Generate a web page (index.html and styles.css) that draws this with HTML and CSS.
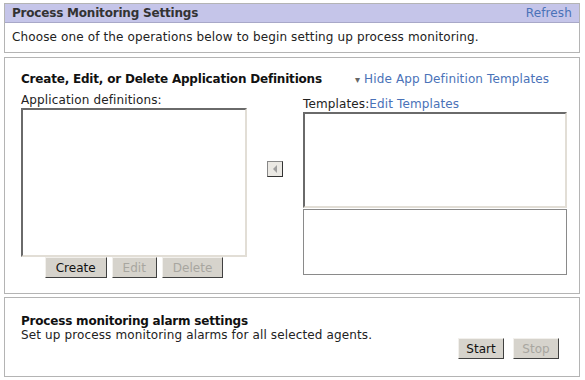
FILE: index.html
```html
<!DOCTYPE html>
<html lang="en">
<head>
    <meta charset="UTF-8">
    <title>Process Monitoring Settings</title>
    <link rel="stylesheet" href="styles.css">
</head>
<body>
    <div class="panel intro">
        <div class="panel-head">
            <span class="panel-title">Process Monitoring Settings</span>
            <a href="#" class="link">Refresh</a>
        </div>
        <div class="intro-text">Choose one of the operations below to begin setting up process monitoring.</div>
    </div>

    <div class="panel defs">
        <div class="defs-head">
            <h3>Create, Edit, or Delete Application Definitions</h3>
            <a href="#" class="link toggle"><span class="caret">&#9662;</span> Hide App Definition Templates</a>
        </div>
        <div class="defs-body">
            <div class="col-left">
                <div class="label">Application definitions:</div>
                <div class="listbox app-list"></div>
                <div class="btn-row">
                    <button class="btn">Create</button>
                    <button class="btn" disabled>Edit</button>
                    <button class="btn" disabled>Delete</button>
                </div>
            </div>
            <div class="col-mid">
                <button class="arrow-btn" disabled><span class="arrow"></span></button>
            </div>
            <div class="col-right">
                <div class="label">Templates:<a href="#" class="link">Edit Templates</a></div>
                <div class="listbox tpl-list"></div>
                <div class="tpl-info"></div>
            </div>
        </div>
    </div>

    <div class="panel alarms">
        <h3>Process monitoring alarm settings</h3>
        <div class="alarms-row">
            <div class="alarms-text">Set up process monitoring alarms for all selected agents.</div>
            <div class="alarms-btns">
                <button class="btn">Start</button>
                <button class="btn" disabled>Stop</button>
            </div>
        </div>
    </div>
</body>
</html>
```

FILE: styles.css
```css
body {
    margin: 0;
    padding: 3px 4px 0 4px;
    font-family: "DejaVu Sans", Verdana, sans-serif;
    font-size: 12px;
    letter-spacing: 0.13px;
    color: #222;
    background: #fff;
}
.link {
    color: #4a72b8;
    text-decoration: none;
}
.panel {
    border: 1px solid #b4b4b4;
    width: 576px;
    box-sizing: border-box;
}
.panel-head {
    display: flex;
    justify-content: space-between;
    align-items: center;
    background: #c5c5e9;
    height: 18px;
    padding: 0 7px 0 7px;
    border-bottom: 1px solid #a8a8c8;
}
.panel-title {
    font-weight: bold;
    color: #333;
    letter-spacing: -0.2px;
}
.intro-text {
    padding: 7px 7px 0 7px;
    height: 22px;
}
.defs {
    height: 237px;
    margin-top: 4px;
    padding: 12px 0 0 16px;
}
.defs h3, .alarms h3 {
    margin: 0;
    font-size: 12px;
    color: #111;
    letter-spacing: -0.2px;
}
.defs-head {
    display: flex;
    align-items: center;
    height: 18px;
}
.defs-head h3 {
    width: 334px;
}
.caret {
    color: #666;
    font-size: 10px;
}
.defs-body {
    display: flex;
    margin-top: 5px;
}
.col-left {
    width: 226px;
}
.label {
    height: 15px;
}
.listbox {
    box-sizing: border-box;
    border: 2px solid;
    border-color: #6a6a6a #e2ded6 #e2ded6 #6a6a6a;
    background: #fff;
}
.app-list {
    width: 226px;
    height: 149px;
}
.btn-row {
    display: flex;
    justify-content: center;
    gap: 5px;
}
.btn {
    font-family: "DejaVu Sans", Verdana, sans-serif;
    font-size: 12px;
    color: #111;
    background: #d6d3cc;
    border: 1px solid;
    border-color: #f2f0ec #404040 #404040 #f2f0ec;
    height: 21px;
    padding: 0 10px;
}
.btn:disabled {
    color: #a8a6a0;
}
.col-mid {
    width: 56px;
    display: flex;
    justify-content: center;
    padding-top: 68px;
}
.arrow-btn {
    width: 16px;
    height: 16px;
    padding: 0;
    background: #ebe9e4;
    border: 1px solid;
    border-color: #888 #333 #333 #888;
    display: flex;
    align-items: center;
    justify-content: center;
}
.arrow {
    width: 0;
    height: 0;
    border-top: 4px solid transparent;
    border-bottom: 4px solid transparent;
    border-right: 4px solid #a0a0a0;
}
.col-right {
    width: 264px;
    padding-top: 4px;
}
.tpl-list {
    width: 264px;
    height: 96px;
}
.tpl-info {
    box-sizing: border-box;
    width: 264px;
    height: 66px;
    margin-top: 1px;
    border: 1px solid #8a8a8a;
}
.alarms {
    height: 80px;
    margin-top: 3px;
    padding: 16px 20px 0 16px;
}
.alarms-row {
    display: flex;
    justify-content: space-between;
}
.alarms-btns {
    display: flex;
    gap: 9px;
    padding-top: 3px;
    margin-top: 7px;
}
.alarms .btn {
    width: 46px;
    padding: 0;
}
```
